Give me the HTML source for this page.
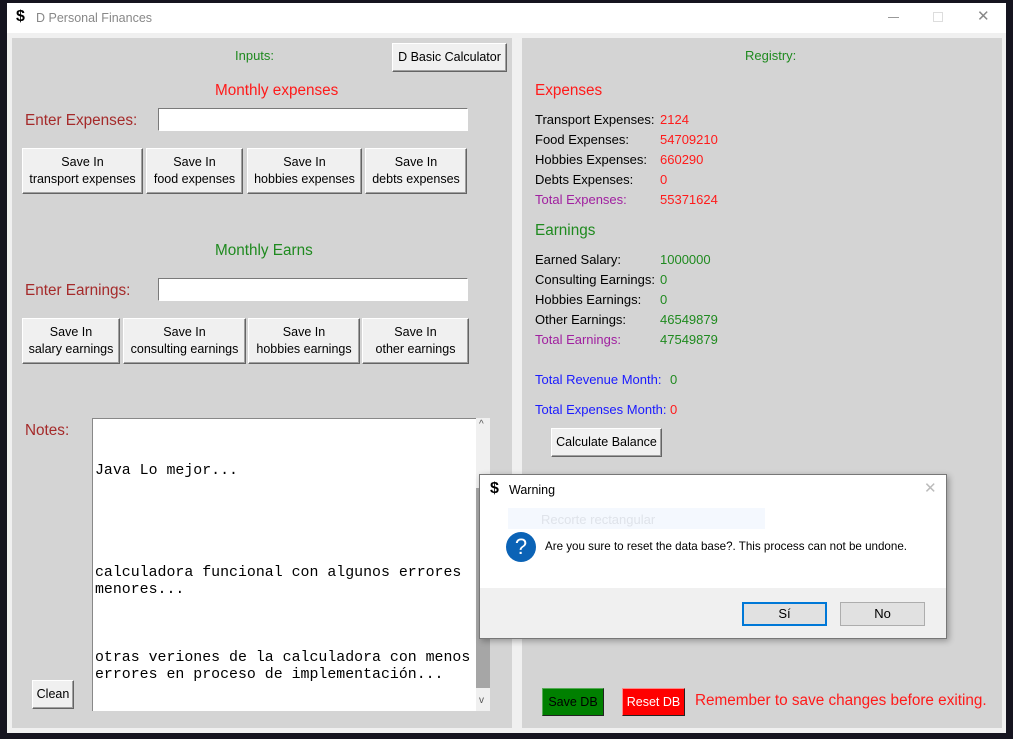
<!DOCTYPE html>
<html><head><meta charset="utf-8"><style>
*{margin:0;padding:0;box-sizing:border-box}
body{width:1013px;height:739px;background:#15141f;position:relative;overflow:hidden;font-family:"Liberation Sans",sans-serif;font-size:13px;color:#000}
.a{position:absolute;white-space:nowrap}
.btn{position:absolute;background:#f0f0f0;border:1px solid;border-color:#fff #646464 #646464 #fff;box-shadow:inset -1px -1px 0 #a0a0a0;text-align:center;font-size:12.5px;line-height:17px;display:flex;flex-direction:column;justify-content:center;align-items:center}
.ent{position:absolute;background:#fff;border:1px solid;border-color:#7a7a7a #fff #fff #7a7a7a}
.big{font-size:15.3px}
.g{color:#1f8a1f}.r{color:#ff1a1a}.br{color:#a52a2a}.p{color:#a020a0}.b{color:#1a1aff}
.mono{font-family:"Liberation Mono","Courier New",monospace;font-size:14.9px;position:absolute;left:95px;white-space:nowrap;letter-spacing:0}
</style></head><body>
<div class="a" style="left:7px;top:3px;width:999px;height:730px;background:#f0f0f0"></div>
<div class="a" style="left:7px;top:3px;width:999px;height:30px;background:#fff"></div>
<div class="a" style="left:16px;top:8px;font-size:16px;font-weight:bold">$</div>
<div class="a" style="left:36px;top:11px;color:#888;font-size:12.5px">D Personal Finances</div>
<div class="a" style="left:888px;top:17px;width:11px;height:1px;background:#999"></div>
<div class="a" style="left:933px;top:12px;width:10px;height:10px;border:1px solid #ddd"></div>
<div class="a" style="left:977px;top:7px;font-size:15px;color:#888">✕</div>

<div class="a" style="left:12px;top:38px;width:500px;height:690px;background:#d4d4d4"></div>
<div class="a" style="left:522px;top:38px;width:480px;height:690px;background:#d4d4d4"></div>

<div class="a g" style="left:235px;top:48px">Inputs:</div>
<div class="btn" style="left:392px;top:43px;width:115px;height:29px">D Basic Calculator</div>
<div class="a r big" style="left:215px;top:82px">Monthly expenses</div>
<div class="a br big" style="left:25px;top:112px">Enter Expenses:</div>
<div class="ent" style="left:158px;top:108px;width:310px;height:23px"></div>
<div class="btn" style="left:22px;top:148px;width:121px;height:46px">Save In<br>transport expenses</div>
<div class="btn" style="left:146px;top:148px;width:97px;height:46px">Save In<br>food expenses</div>
<div class="btn" style="left:247px;top:148px;width:115px;height:46px">Save In<br>hobbies expenses</div>
<div class="btn" style="left:365px;top:148px;width:102px;height:46px">Save In<br>debts expenses</div>

<div class="a g big" style="left:215px;top:242px">Monthly Earns</div>
<div class="a br big" style="left:25px;top:282px">Enter Earnings:</div>
<div class="ent" style="left:158px;top:278px;width:310px;height:23px"></div>
<div class="btn" style="left:22px;top:318px;width:98px;height:46px">Save In<br>salary earnings</div>
<div class="btn" style="left:123px;top:318px;width:123px;height:46px">Save In<br>consulting earnings</div>
<div class="btn" style="left:248px;top:318px;width:112px;height:46px">Save In<br>hobbies earnings</div>
<div class="btn" style="left:362px;top:318px;width:107px;height:46px">Save In<br>other earnings</div>

<div class="a br big" style="left:25px;top:422px">Notes:</div>
<div class="a" style="left:92px;top:418px;width:398px;height:293px;background:#fff;border-top:1px solid #888;border-left:1px solid #888"></div>
<div class="a" style="left:476px;top:418px;width:14px;height:293px;background:#f0f0f0"></div>
<div class="a" style="left:476px;top:488px;width:14px;height:200px;background:#a6a6a6"></div>
<div class="a" style="left:479px;top:419px;font-size:10px;color:#555">^</div>
<div class="a" style="left:479px;top:695px;font-size:10px;color:#555">v</div>
<div class="mono" style="top:463px">Java Lo mejor...</div>
<div class="mono" style="top:565px">calculadora funcional con algunos errores</div>
<div class="mono" style="top:582px">menores...</div>
<div class="mono" style="top:650px">otras veriones de la calculadora con menos</div>
<div class="mono" style="top:667px">errores en proceso de implementación...</div>
<div class="btn" style="left:32px;top:680px;width:42px;height:29px">Clean</div>

<div class="a g" style="left:745px;top:48px">Registry:</div>
<div class="a r big" style="left:535px;top:82px">Expenses</div>
<div class="a" style="left:535px;top:112px">Transport Expenses:</div><div class="a r" style="left:660px;top:112px">2124</div>
<div class="a" style="left:535px;top:132px">Food Expenses:</div><div class="a r" style="left:660px;top:132px">54709210</div>
<div class="a" style="left:535px;top:152px">Hobbies Expenses:</div><div class="a r" style="left:660px;top:152px">660290</div>
<div class="a" style="left:535px;top:172px">Debts Expenses:</div><div class="a r" style="left:660px;top:172px">0</div>
<div class="a p" style="left:535px;top:192px">Total Expenses:</div><div class="a r" style="left:660px;top:192px">55371624</div>
<div class="a g big" style="left:535px;top:222px">Earnings</div>
<div class="a" style="left:535px;top:252px">Earned Salary:</div><div class="a g" style="left:660px;top:252px">1000000</div>
<div class="a" style="left:535px;top:272px">Consulting Earnings:</div><div class="a g" style="left:660px;top:272px">0</div>
<div class="a" style="left:535px;top:292px">Hobbies Earnings:</div><div class="a g" style="left:660px;top:292px">0</div>
<div class="a" style="left:535px;top:312px">Other Earnings:</div><div class="a g" style="left:660px;top:312px">46549879</div>
<div class="a p" style="left:535px;top:332px">Total Earnings:</div><div class="a g" style="left:660px;top:332px">47549879</div>
<div class="a b" style="left:535px;top:372px">Total Revenue Month:</div><div class="a g" style="left:670px;top:372px">0</div>
<div class="a b" style="left:535px;top:402px">Total Expenses Month:</div><div class="a r" style="left:670px;top:402px">0</div>
<div class="btn" style="left:551px;top:428px;width:111px;height:29px">Calculate Balance</div>

<div class="btn" style="left:542px;top:688px;width:62px;height:28px;background:#008000;border-color:#5a5 #222 #222 #5a5;box-shadow:none">Save DB</div>
<div class="btn" style="left:622px;top:688px;width:63px;height:28px;background:#ff0000;color:#fff;border-color:#f88 #222 #222 #f88;box-shadow:none">Reset DB</div>
<div class="a r big" style="left:695px;top:692px">Remember to save changes before exiting.</div>

<div class="a" style="left:479px;top:474px;width:468px;height:165px;background:#f0f0f0;border:1px solid #777;box-shadow:2px 2px 6px rgba(0,0,0,.3)"></div>
<div class="a" style="left:480px;top:475px;width:466px;height:113px;background:#fff"></div>
<div class="a" style="left:490px;top:480px;font-size:16px;font-weight:bold">$</div>
<div class="a" style="left:509px;top:483px;font-size:12.5px">Warning</div>
<div class="a" style="left:924px;top:479px;font-size:15px;color:#bbb">✕</div>
<div class="a" style="left:508px;top:508px;width:257px;height:21px;background:#f4f8fe"></div>
<div class="a" style="left:541px;top:512px;color:#dfe3ea">Recorte rectangular</div>
<div class="a" style="left:506px;top:532px;width:30px;height:30px;border-radius:50%;background:#0b63b6;color:#fff;font-size:22px;text-align:center;line-height:30px">?</div>
<div class="a" style="left:545px;top:540px;font-size:11.6px">Are you sure to reset the data base?. This process can not be undone.</div>
<div class="a" style="left:742px;top:602px;width:85px;height:24px;background:#e1e1e1;border:2px solid #0078d7;text-align:center;line-height:20px">Sí</div>
<div class="a" style="left:840px;top:602px;width:85px;height:24px;background:#e1e1e1;border:1px solid #adadad;text-align:center;line-height:22px">No</div>
</body></html>
